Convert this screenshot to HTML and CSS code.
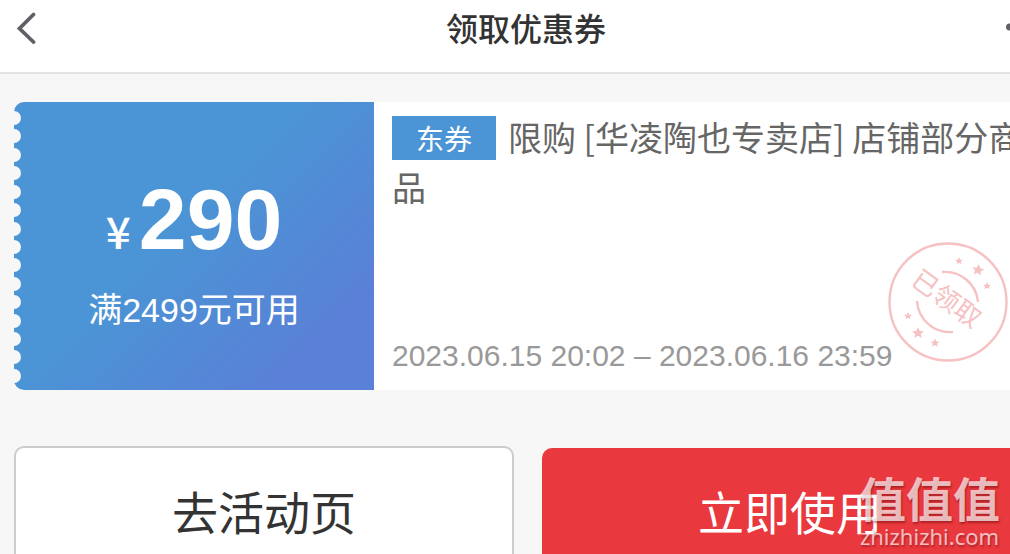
FILE: index.html
```
<!DOCTYPE html>
<html lang="zh-CN">
<head>
    <meta charset="UTF-8">
    <title>领取优惠券</title>
    <link rel="stylesheet" href="styles.css">
</head>
<body>
    <div class="page">
        <header class="header">
            <button class="iconButton" type="button" aria-label="返回">
                <svg width="20" height="32" viewBox="0 0 20 32"><path d="M17.5 2.5L3.5 16.5L17.5 30" fill="none" stroke="#606066" stroke-width="3.8" stroke-linecap="round"/></svg>
            </button>
            <h1>领取优惠券</h1>
            <button class="iconButton" type="button" aria-label="更多">
                <svg width="36" height="32" viewBox="0 0 36 32" fill="#606066"><circle cx="3.5" cy="15" r="3.5"/><circle cx="18" cy="15" r="3.5"/><circle cx="32" cy="15" r="3.5"/></svg>
            </button>
        </header>

        <main>
            <article class="coupon">
                <section class="price">
                    <!-- ticket perforation -->
                    <div class="notches">
                        <i></i><i></i><i></i><i></i><i></i><i></i><i></i><i></i><i></i><i></i><i></i><i></i><i></i><i></i><i></i>
                    </div>
                    <div class="priceText">
                        <p class="amount"><span class="yen">¥</span>290</p>
                        <p class="limit">满2499元可用</p>
                    </div>
                </section>
                <section class="info">
                    <h2><span class="tag">东券</span>限购 [华凌陶也专卖店] 店铺部分商品</h2>
                    <p class="date">2023.06.15 20:02 – 2023.06.16 23:59</p>
                    <svg class="stamp" width="120" height="120" viewBox="0 0 120 120" role="img" aria-label="已领取">
                        <defs>
                            <path id="star" d="M0-5L1.5-1.7L5-1.5L2.3.8L3.1 4.2L0 2.3L-3.1 4.2L-2.3.8L-5-1.5L-1.5-1.7Z"/>
                        </defs>
                        <g fill="none" stroke="#f6c1c3" stroke-width="2.4">
                            <circle cx="60" cy="60" r="58.5"/>
                            <path d="M54 30A33 33 0 0 1 90 60M29 59A33 33 0 0 0 65 90"/>
                        </g>
                        <g fill="#f6c1c3">
                            <use href="#star" transform="translate(71 19) scale(.8)"/>
                            <use href="#star" transform="translate(90 28) scale(1.2) rotate(10)"/>
                            <use href="#star" transform="translate(99 44) scale(.8)"/>
                            <use href="#star" transform="translate(20 74) scale(.8)"/>
                            <use href="#star" transform="translate(30 91) scale(1.2)"/>
                            <use href="#star" transform="translate(47 101) scale(.9)"/>
                            <text class="stampText" transform="translate(59 56) rotate(36)" x="0" y="10" text-anchor="middle">已领取</text>
                        </g>
                    </svg>
                </section>
            </article>

            <nav class="actions">
                <button class="button plain" type="button">去活动页</button>
                <button class="button primary" type="button">立即使用</button>
            </nav>
        </main>
    </div>

    <div class="watermark">
        <strong>值值值</strong>
        <span>zhizhizhi.com</span>
    </div>
</body>
</html>
```
FILE: styles.css
```
body {
    margin: 0;
    height: 100vh;
    overflow: hidden;
    position: relative;
    background-color: #f7f7f7;
    font-family: "Liberation Sans", "Noto Sans CJK SC", sans-serif;
    color: #333;
}

h1, h2, p {
    margin: 0;
}

/* a little wider than the window, the right side runs off screen */
.page {
    width: calc(100% + 42px);
}

.header {
    display: flex;
    align-items: center;
    justify-content: space-between;
    height: 74px;
    padding: 0 10px 16px 16px;
    border-bottom: 2px solid #e3e3e3;
    background-color: #fff;
    box-sizing: border-box;
}
.header h1 {
    padding: 4px 6px 0 0;
    font-size: 32px;
    line-height: 40px;
    font-weight: 500;
}
.iconButton {
    display: flex;
    width: 36px;
    padding: 0;
    border: 0;
    background: none;
}

main {
    padding: 28px 14px;
}

.coupon {
    display: flex;
    height: 288px;
    background-color: #fff;
    border-radius: 10px;
}
.price {
    display: flex;
    width: 360px;
    flex-shrink: 0;
    color: #fff;
    background: linear-gradient(135deg, #4b94d5 45%, #5a80d7 85%);
    border-radius: 10px 0 0 10px;
}
.notches {
    display: flex;
    flex-direction: column;
    justify-content: space-between;
    padding: 9px 0 7px;
}
.notches i {
    width: 7px;
    height: 14px;
    border-radius: 0 7px 7px 0;
    background-color: #f7f7f7;
}
.priceText {
    flex: 1;
    padding: 69px 7px 0 0;
    text-align: center;
}
.amount {
    font-size: 86px;
    line-height: 96px;
    font-weight: bold;
}
.yen {
    margin-right: 8px;
    font-family: "Noto Sans CJK SC", sans-serif;
    font-size: 44px;
    line-height: 44px;
    font-weight: 500;
}
.limit {
    margin-top: 18px;
    font-size: 34px;
    line-height: 50px;
}

.info {
    position: relative;
    display: flex;
    flex: 1;
    flex-direction: column;
    justify-content: space-between;
    padding: 10px 6px 14px 18px;
}
.info h2 {
    font-family: "Noto Sans CJK SC", sans-serif;
    font-size: 34px;
    line-height: 50px;
    font-weight: normal;
    color: #666;
}
.tag {
    display: inline-block;
    width: 104px;
    margin-top: 4px;
    margin-right: 12px;
    font-size: 28px;
    line-height: 44px;
    text-align: center;
    vertical-align: top;
    color: #fff;
    background-color: #4b94d5;
}
.date {
    font-size: 30px;
    line-height: 40px;
    color: #999;
}
.stamp {
    position: absolute;
    right: 30px;
    bottom: 28px;
}
.stampText {
    font-family: "Noto Sans CJK SC", sans-serif;
    font-size: 26px;
}

.actions {
    display: flex;
    align-items: center;
    gap: 28px;
    margin-top: 56px;
}
.button {
    flex: 1 1 0;
    box-sizing: content-box;
    height: 124px;
    padding: 0 0 8px;
    border: 0;
    border-radius: 10px;
    font-family: "Noto Sans CJK SC", sans-serif;
    font-size: 46px;
    line-height: 124px;
}
.plain {
    border: 2px solid #ccc;
    color: #333;
    background-color: #fff;
}
.primary {
    color: #fff;
    background-color: #e9383e;
}

.watermark {
    position: absolute;
    right: 10px;
    bottom: 6px;
    display: flex;
    flex-direction: column;
    align-items: center;
    color: rgba(255, 255, 255, 0.7);
    text-shadow: 1px 2px 2px rgba(90, 0, 0, 0.4);
}
.watermark strong {
    font-family: "Noto Sans CJK SC", sans-serif;
    font-size: 47px;
    line-height: 54px;
}
.watermark span {
    font-family: "Noto Sans", sans-serif;
    font-size: 22px;
    line-height: 24px;
}
```
